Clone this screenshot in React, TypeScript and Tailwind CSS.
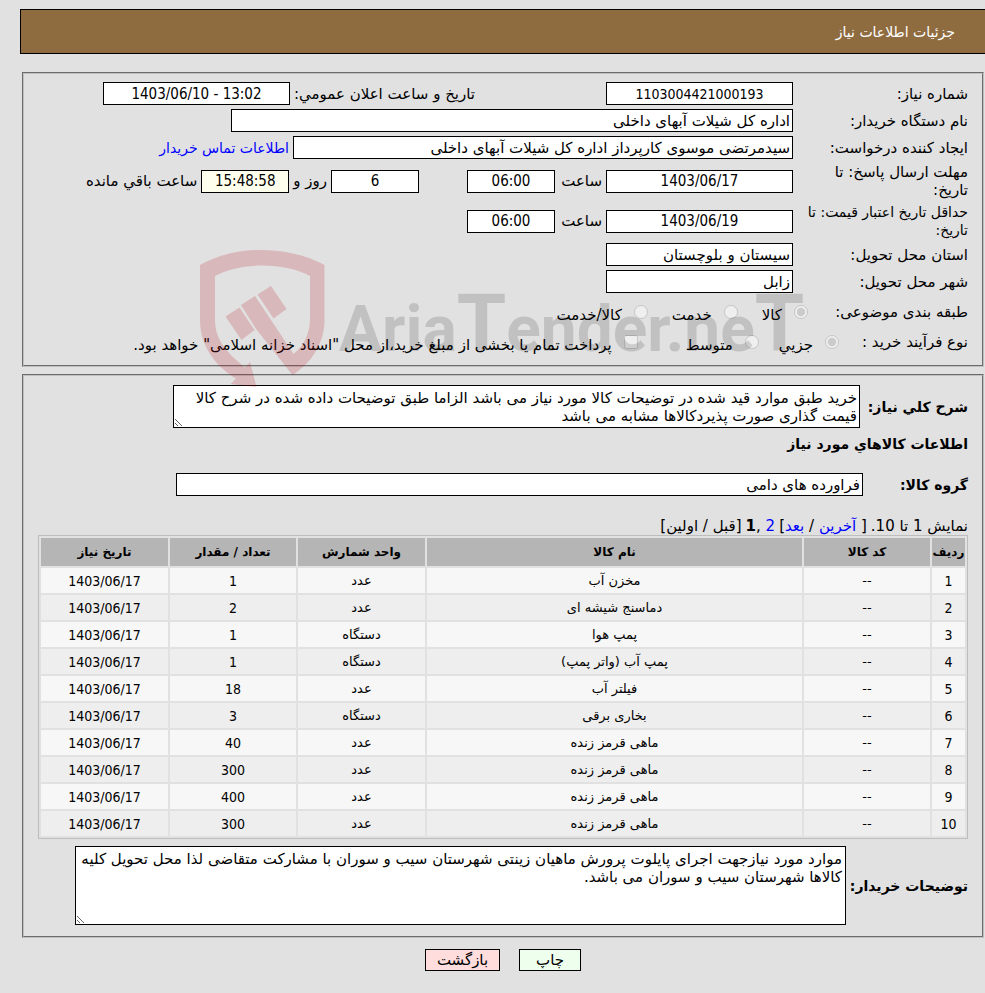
import { ReactNode } from 'react'
import clsx from 'clsx'

interface Item {
  name: string
  unit: string
  count: number
}

const ITEMS: Item[] = [
  { name: 'مخزن آب', unit: 'عدد', count: 1 },
  { name: 'دماسنج شیشه ای', unit: 'عدد', count: 2 },
  { name: 'پمپ هوا', unit: 'دستگاه', count: 1 },
  { name: 'پمپ آب (واتر پمپ)', unit: 'دستگاه', count: 1 },
  { name: 'فیلتر آب', unit: 'عدد', count: 18 },
  { name: 'بخاری برقی', unit: 'دستگاه', count: 3 },
  { name: 'ماهی قرمز زنده', unit: 'عدد', count: 40 },
  { name: 'ماهی قرمز زنده', unit: 'عدد', count: 300 },
  { name: 'ماهی قرمز زنده', unit: 'عدد', count: 400 },
  { name: 'ماهی قرمز زنده', unit: 'عدد', count: 300 },
]

const NEED_DATE = '1403/06/17'

const GENERAL_DESC =
  'خرید طبق موارد قید شده در توضیحات کالا مورد نیاز می باشد الزاما طبق توضیحات داده شده در شرح کالا قیمت گذاری صورت پذیردکالاها مشابه می باشد'

const BUYER_DESC =
  'موارد مورد نیازجهت اجرای پایلوت پرورش ماهیان زینتی شهرستان سیب و سوران با مشارکت متقاضی لذا محل تحویل کلیه کالاها شهرستان سیب و سوران می باشد.'

function Field({ id, value, className, numeric }: {
  id: string
  value: string
  className?: string
  numeric?: boolean
}) {
  return (
    <input
      id={id}
      readOnly
      defaultValue={value}
      dir={numeric ? 'ltr' : 'rtl'}
      className={clsx(
        'h-[23px] shrink-0 border border-black px-0.5 leading-[18px]',
        numeric && 'text-center font-["DejaVu_Sans_Condensed"]',
        className,
      )}
    />
  )
}

function Row({ id, label, small, children }: {
  id: string
  label: string
  small?: boolean
  children: ReactNode
}) {
  return (
    <div className="flex items-center gap-1">
      <label htmlFor={id} className={clsx('w-[171px] shrink-0', small && 'text-[14px]')}>{label}</label>
      {children}
    </div>
  )
}

function Choice({ type = 'radio', name, text, checked }: {
  type?: 'radio' | 'checkbox'
  name: string
  text: string
  checked?: boolean
}) {
  return (
    <label className="flex items-center gap-3">
      <input type={type} name={name} defaultChecked={checked} disabled className="size-[14px]" />
      <span className="pt-1.5">{text}</span>
    </label>
  )
}

function Watermark() {
  return (
    <svg
      aria-hidden="true"
      viewBox="0 0 620 150"
      className="pointer-events-none absolute left-[190px] top-[240px] w-[620px]"
    >
      <g fill="#b4141e" fillOpacity="0.2">
        <path d="M10 25 C30 14 50 10 71 10 C95 10 115 15 134.500 25 V80 C134.500 102 122 123 102.500 135 L66.500 89.500 L81 80 L103.500 114 C114 106 120 94 120 78 V36 C95 22 50 22 25 36 V80 C25 102 40 115 55 127.500 L60 122 L66.500 147 L40.500 144 L46 138.500 C28 128 10 108 10 80 Z" />
        <path d="M35.500 76.500 49.500 67.500 64.500 90 51.500 100Z" />
        <path d="M51 65 65 56 81 80 66.500 89.500Z" />
        <path d="M67.500 54.500 81 46 96.500 69 83.500 78.500Z" />
      </g>
      <text
        x="149"
        y="111"
        direction="ltr"
        fill="#000"
        fillOpacity="0.14"
        className='font-["Roboto",sans-serif] text-[64px] font-bold'
      >
        Aria<tspan className="text-[80px]">T</tspan>ender.ne<tspan className="text-[80px]">T</tspan>
      </text>
    </svg>
  )
}

const cell = 'h-[25px] p-0'
const numCell = 'h-[25px] p-0 font-["DejaVu_Sans_Condensed"] text-[14px] leading-4'

export default function App() {
  return (
    <div
      dir="rtl"
      className='relative min-h-screen bg-[#e1e1e1] pb-5 pt-[9px] font-["DejaVu_Sans",sans-serif] text-[15px] leading-[18px] text-black [&_input]:bg-white [&_textarea]:bg-white'
    >
      <header className="ml-5 flex h-[45px] items-center border-y border-l border-black bg-[#8f6c3f] pr-[30px] text-white">
        <h1 className="text-[14px]">جزئیات اطلاعات نیاز</h1>
      </header>

      <main className="ml-[22px] mr-px">
        <fieldset className="mt-[18px] flex flex-col gap-1 border-2 border-[#c0c0c0] px-[14px] pb-[10px] pt-2 [border-style:groove]">
          <Row id="need-no" label="شماره نیاز:">
            <Field id="need-no" value="1103004421000193" numeric className="w-[187px] text-[14px]" />
            <label htmlFor="announce" className="mr-[127px]">تاریخ و ساعت اعلان عمومي:</label>
            <Field id="announce" value="1403/06/10 - 13:02" numeric className="w-[187px]" />
          </Row>
          <Row id="buyer" label="نام دستگاه خریدار:">
            <Field id="buyer" value="اداره کل شیلات آبهای داخلی" className="w-[562px]" />
          </Row>
          <Row id="creator" label="ایجاد کننده درخواست:">
            <Field id="creator" value="سیدمرتضی موسوی کارپرداز اداره کل شیلات آبهای داخلی" className="w-[500px]" />
            <a href="#contact" className="text-[14px] text-[#0000ff]">اطلاعات تماس خریدار</a>
          </Row>
          <Row id="deadline" label="مهلت ارسال پاسخ: تا تاریخ:">
            <Field id="deadline" value="1403/06/17" numeric className="w-[187px]" />
            <label htmlFor="deadline-hour" className="w-[43px]">ساعت</label>
            <Field id="deadline-hour" value="06:00" numeric className="w-[88px]" />
            <div className="mr-11 flex items-center gap-1">
              <Field id="days-left" value="6" numeric className="w-[88px]" />
              <label htmlFor="days-left">روز و</label>
              <Field id="time-left" value="15:48:58" numeric className="w-[88px] bg-[#ffffee]!" />
              <label htmlFor="time-left">ساعت باقي مانده</label>
            </div>
          </Row>
          <Row id="validity" label="حداقل تاریخ اعتبار قیمت: تا تاریخ:" small>
            <Field id="validity" value="1403/06/19" numeric className="w-[187px]" />
            <label htmlFor="validity-hour" className="w-[43px]">ساعت</label>
            <Field id="validity-hour" value="06:00" numeric className="w-[88px]" />
          </Row>
          <Row id="province" label="استان محل تحویل:">
            <Field id="province" value="سیستان و بلوچستان" className="w-[187px]" />
          </Row>
          <Row id="city" label="شهر محل تحویل:">
            <Field id="city" value="زابل" className="w-[187px]" />
          </Row>
          <div className="mt-0.5 flex h-[26px] items-center">
            <span className="w-[160px]">طبقه بندی موضوعی:</span>
            <div className="flex gap-6">
              <Choice name="category" text="کالا" checked />
              <Choice name="category" text="خدمت" />
              <Choice name="category" text="کالا/خدمت" />
            </div>
          </div>
          <div className="flex h-[26px] items-center">
            <span className="w-[129px]">نوع فرآیند خرید :</span>
            <div className="flex gap-5">
              <Choice name="process" text="جزیي" checked />
              <Choice name="process" text="متوسط" />
              <div className="mr-7">
                <Choice
                  type="checkbox"
                  name="treasury"
                  text={'پرداخت تمام یا بخشی از مبلغ خرید،از محل "اسناد خزانه اسلامی" خواهد بود.'}
                />
              </div>
            </div>
          </div>
        </fieldset>

        <fieldset className="mt-[7px] border-2 border-[#c0c0c0] px-[14px] pb-[11px] pt-[9px] [border-style:groove]">
          <div className="flex items-center gap-[5px]">
            <label htmlFor="general" className="w-[103px] shrink-0 whitespace-nowrap text-[14px] font-bold">شرح کلي نیاز:</label>
            <textarea
              id="general"
              readOnly
              defaultValue={GENERAL_DESC}
              className="h-[43px] w-[687px] border border-black px-0.5 pt-[3px]"
            />
          </div>
          <h2 className="mt-[7px] text-[14px] font-bold">اطلاعات کالاهاي مورد نیاز</h2>
          <div className="mt-5 flex items-center">
            <label htmlFor="group" className="w-[105px] text-[14px] font-bold">گروه کالا:</label>
            <Field id="group" value="فراورده های دامی" className="w-[687px]" />
          </div>

          <nav className="mt-[21px] flex gap-1">
            <span>نمایش 1 تا 10.</span>
            <span>
              [ <a href="#last" className="text-[#0000ff]">آخرین</a> / <a href="#next" className="text-[#0000ff]">بعد</a>]
            </span>
            <span dir="ltr">
              <b>1</b>, <a href="#page-2" className="text-[#0000ff]">2</a>
            </span>
            <span>[قبل / اولین]</span>
          </nav>

          <table className="w-full table-fixed border-separate border-spacing-[2px] border border-[#bdbdbd] text-center text-[13px]">
            <thead>
              <tr className="bg-[#b5b5b5] text-[12px]">
                <th className="h-7 w-[33px] p-0">ردیف</th>
                <th className="w-[126px] p-0">کد کالا</th>
                <th className="p-0">نام کالا</th>
                <th className="w-[127px] p-0">واحد شمارش</th>
                <th className="w-[126px] p-0">تعداد / مقدار</th>
                <th className="w-[127px] p-0">تاریخ نیاز</th>
              </tr>
            </thead>
            <tbody>
              {ITEMS.map((item, i) => (
                <tr key={i} className="odd:bg-[#f7f7f7] even:bg-[#eeeeee]">
                  <td className={numCell}>{i + 1}</td>
                  <td className={cell}>--</td>
                  <td className={cell}>{item.name}</td>
                  <td className={cell}>{item.unit}</td>
                  <td className={numCell}>{item.count}</td>
                  <td className={numCell}>{NEED_DATE}</td>
                </tr>
              ))}
            </tbody>
          </table>

          <div className="mt-[7px] flex items-center gap-1">
            <label htmlFor="notes" className="w-[118px] shrink-0 whitespace-nowrap text-[14px] font-bold">توضیحات خریدار:</label>
            <textarea
              id="notes"
              readOnly
              defaultValue={BUYER_DESC}
              className="h-[79px] w-[771px] border border-black px-[3px] pt-[3px]"
            />
          </div>
        </fieldset>

        <div className="mt-[11px] flex justify-center gap-[19px]">
          <button type="button" className="h-[22px] w-[62px] border border-black bg-[#eeffee]">چاپ</button>
          <button type="button" className="h-[22px] w-[75px] border border-black bg-[#ffdddd]">بازگشت</button>
        </div>
      </main>

      <Watermark />
    </div>
  )
}
